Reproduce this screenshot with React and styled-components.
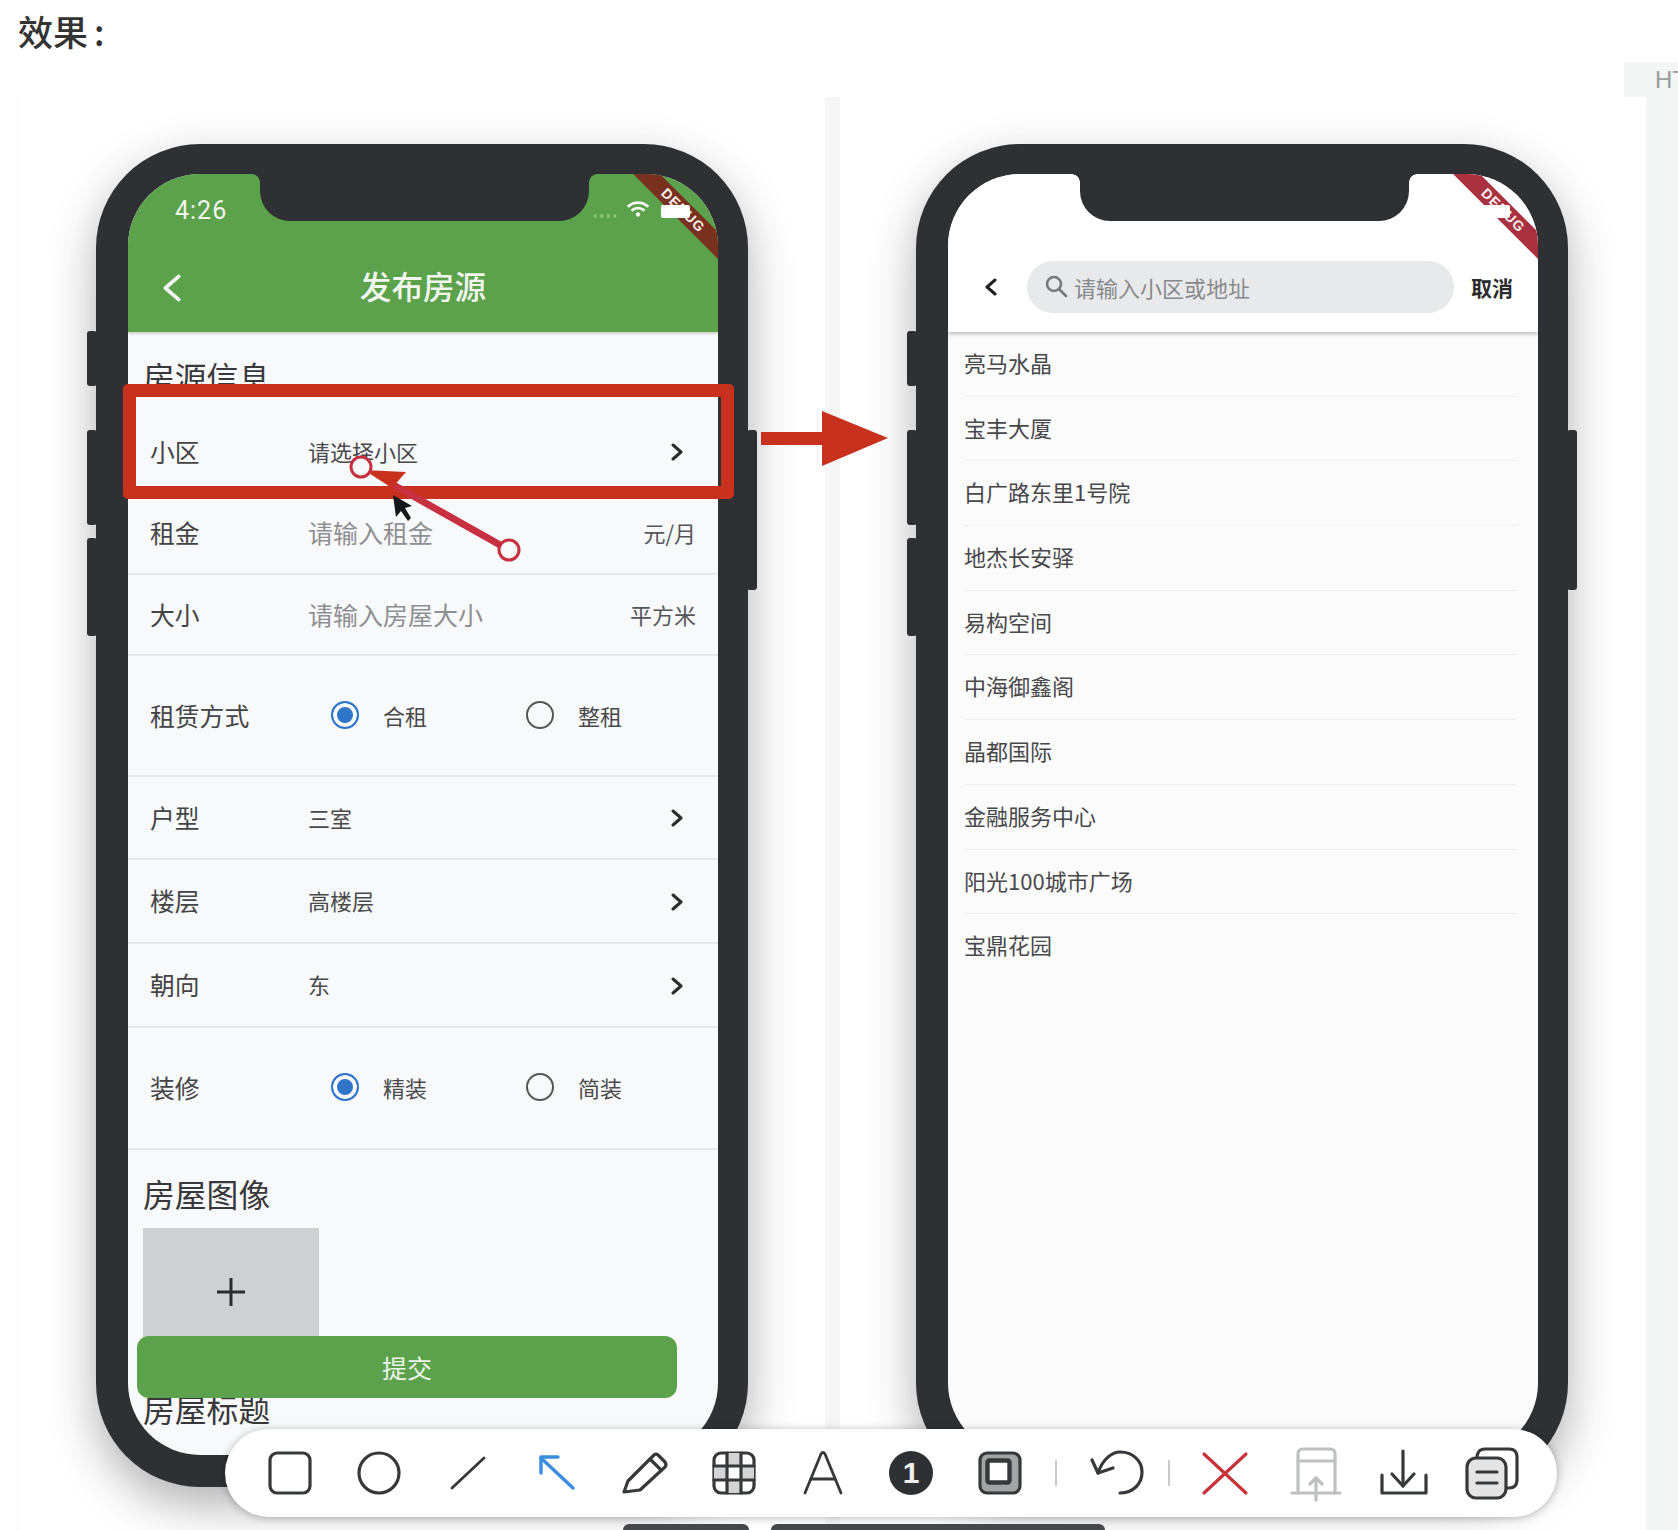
import React from 'react';
import styled, { createGlobalStyle } from 'styled-components';
import { FaWifi } from 'react-icons/fa';

const GlobalStyle = createGlobalStyle`
  html, body {
    margin: 0;
    padding: 0;
    background: #fff;
  }
  * {
    box-sizing: border-box;
  }
`;

const FONT = `"Noto Sans CJK SC", "Noto Sans", sans-serif`;
const GREEN = '#5ca14b';
const FRAME = '#2f3033';
const RED = '#c9311f';

const communities = [
  '亮马水晶',
  '宝丰大厦',
  '白广路东里1号院',
  '地杰长安驿',
  '易构空间',
  '中海御鑫阁',
  '晶都国际',
  '金融服务中心',
  '阳光100城市广场',
  '宝鼎花园',
];

const Chevron = ({ size = 18, color = '#2c2c2e', width = 3, dir = 'right' }) => (
  <svg width={size * 0.67} height={size} viewBox="0 0 12 18" fill="none">
    <polyline
      points={dir === 'right' ? '2,2 10,9 2,16' : '10,2 2,9 10,16'}
      stroke={color}
      strokeWidth={width}
      strokeLinecap="round"
      strokeLinejoin="round"
    />
  </svg>
);

const ToolIcon = ({ children, color = '#37383b', width = 3.2 }) => (
  <ToolSvg viewBox="0 0 44 44" fill="none" stroke={color} strokeWidth={width} strokeLinecap="round" strokeLinejoin="round">
    {children}
  </ToolSvg>
);

const FormRow = ({ label, value, trailing, height, muted, big }) => (
  <Row $height={height}>
    <RowLabel>{label}</RowLabel>
    <RowValue $muted={muted} $big={big}>{value}</RowValue>
    {trailing === 'chevron' ? (
      <ChevronSlot>
        <Chevron />
      </ChevronSlot>
    ) : (
      <Unit>{trailing}</Unit>
    )}
  </Row>
);

const RadioRow = ({ label, options, height }) => (
  <Row $height={height}>
    <RowLabel>{label}</RowLabel>
    <RadioGroup>
      {options.map((option, i) => (
        <RadioOption key={option}>
          <Radio $checked={i === 0} />
          <span>{option}</span>
        </RadioOption>
      ))}
    </RadioGroup>
  </Row>
);

const Bezel = () => (
  <>
    <SideKey $side="left" $top={187} $height={55} />
    <SideKey $side="left" $top={286} $height={95} />
    <SideKey $side="left" $top={394} $height={98} />
    <SideKey $side="right" $top={286} $height={160} />
  </>
);

const Top = ({ dark }) => (
  <>
    <Notch />
    <Ribbon $dark={dark}>DEBUG</Ribbon>
    <Battery />
  </>
);

const App = () => {
  return (
    <Page>
      <GlobalStyle />
      <TopBar>
        <Heading>
          效果<Colon>:</Colon>
        </Heading>
        <FileTag>HT</FileTag>
      </TopBar>

      <Stage>
        <Panel>
          <Phone>
            <Bezel />
            <Screen>
              <Top dark />
              <GreenHeader>
                <StatusBar>
                  <Clock>4:26</Clock>
                  <StatusIcons>
                    <Dots />
                    <FaWifi size={22} color="#f4f8f1" />
                  </StatusIcons>
                </StatusBar>
                <NavBar>
                  <BackSlot>
                    <Chevron size={30} color="#f1f6ee" width={2.2} dir="left" />
                  </BackSlot>
                  <NavTitle>发布房源</NavTitle>
                </NavBar>
              </GreenHeader>

              <SectionTitle $top={29} $height={81}>房源信息</SectionTitle>
              <FormRow label="小区" value="请选择小区" trailing="chevron" height={79} />
              <FormRow label="租金" value="请输入租金" trailing="元/月" height={83} muted big />
              <FormRow label="大小" value="请输入房屋大小" trailing="平方米" height={81} muted big />
              <RadioRow label="租赁方式" options={['合租', '整租']} height={121} />
              <FormRow label="户型" value="三室" trailing="chevron" height={83} />
              <FormRow label="楼层" value="高楼层" trailing="chevron" height={84} />
              <FormRow label="朝向" value="东" trailing="chevron" height={84} />
              <RadioRow label="装修" options={['精装', '简装']} height={122} />

              <SectionTitle $top={28} $height={78}>房屋图像</SectionTitle>
              <ImagePicker>
                <svg width="30" height="30" viewBox="0 0 30 30" stroke="#2c2c2e" strokeWidth="3">
                  <line x1="15" y1="1" x2="15" y2="29" />
                  <line x1="1" y1="15" x2="29" y2="15" />
                </svg>
              </ImagePicker>
              <SectionTitle $top={37} $height={80}>房屋标题</SectionTitle>
              <SubmitButton>提交</SubmitButton>
            </Screen>
          </Phone>
        </Panel>

        <Gutter />

        <Panel $right>
          <Phone>
            <Bezel />
            <Screen $white>
              <Top />
              <SearchHeader>
                <BackSmall>
                  <Chevron size={18} color="#222" width={3} dir="left" />
                </BackSmall>
                <SearchPill>
                  <svg width="24" height="24" viewBox="0 0 24 24" fill="none" stroke="#77787c" strokeWidth="2.6" strokeLinecap="round">
                    <circle cx="10" cy="9" r="7" />
                    <line x1="15" y1="14" x2="22" y2="21" />
                  </svg>
                  <SearchText>请输入小区或地址</SearchText>
                </SearchPill>
                <Cancel>取消</Cancel>
              </SearchHeader>
              <List>
                {communities.map((name) => (
                  <ListItem key={name}>{name}</ListItem>
                ))}
              </List>
            </Screen>
          </Phone>
        </Panel>

        <EdgeStrip />
      </Stage>

      <Highlight />

      <Annotation width="200" height="130" viewBox="0 0 200 130" $left={340} $top={445}>
        <line x1="169" y1="105" x2="50" y2="38" stroke="#c7303f" strokeWidth="7" />
        <polygon points="24,25 66,27 52,43" fill={RED} />
        <circle cx="21" cy="22" r="10" fill="#f8f9fb" stroke="#c7303f" strokeWidth="3" />
        <circle cx="169" cy="105" r="10" fill="#f8f9fb" stroke="#c7303f" strokeWidth="3" />
        <polygon points="53,50 56,72 61,66 68,76 71,73 65,63 72,61" fill="#16171a" />
      </Annotation>

      <Annotation width="130" height="60" viewBox="0 0 130 60" $left={760} $top={409}>
        <rect x="1" y="23" width="65" height="13" fill={RED} />
        <polygon points="62,2 128,29 62,57" fill={RED} />
      </Annotation>

      <Toolbar>
        <ToolGroup>
          <ToolIcon>
            <rect x="2" y="2" width="40" height="40" rx="7" />
          </ToolIcon>
          <ToolIcon>
            <circle cx="22" cy="22" r="20" />
          </ToolIcon>
          <ToolIcon width={2.8}>
            <line x1="6" y1="37" x2="38" y2="7" />
          </ToolIcon>
          <ToolIcon color="#3a8de0" width={3.4}>
            <line x1="7" y1="7" x2="39" y2="37" />
            <polyline points="7,22 7,6 24,6" />
          </ToolIcon>
          <ToolIcon>
            <path d="M1 41 L5 30 L31 4 Q33 2 35 4 L42 11 Q44 14 42 16 L17 39 Z" />
            <line x1="27" y1="8" x2="38" y2="19" />
          </ToolIcon>
          <ToolIcon>
            <rect x="2" y="2" width="40" height="40" rx="7" />
            <rect x="15" y="2" width="14" height="13" fill="#d4d4d5" stroke="none" />
            <rect x="2" y="15" width="13" height="14" fill="#d4d4d5" stroke="none" />
            <rect x="29" y="15" width="13" height="14" fill="#d4d4d5" stroke="none" />
            <rect x="15" y="29" width="14" height="13" fill="#d4d4d5" stroke="none" />
            <line x1="15" y1="2" x2="15" y2="42" />
            <line x1="29" y1="2" x2="29" y2="42" />
            <line x1="2" y1="15" x2="42" y2="15" />
            <line x1="2" y1="29" x2="42" y2="29" />
          </ToolIcon>
          <ToolIcon width={2.8}>
            <path d="M4 42 L20 3 Q22 0 24 3 L40 42" />
            <line x1="10" y1="28" x2="34" y2="28" />
          </ToolIcon>
          <ToolIcon>
            <circle cx="22" cy="22" r="22" fill="#2f3033" stroke="none" />
            <BadgeText x="22" y="32">1</BadgeText>
          </ToolIcon>
          <ToolIcon>
            <rect x="2" y="2" width="40" height="40" rx="7" fill="#a3a4a5" />
            <rect x="9.5" y="9.5" width="22" height="22" rx="2" fill="#fff" strokeWidth="4.4" />
          </ToolIcon>
        </ToolGroup>
        <Separator $before={33} $after={38} />
        <ToolIcon>
          <path d="M3 22 C8 7 18 1 25 1 C38 1 47 10 47 21 C47 33 38 42 25 42" />
          <polyline points="-3,9 3,22 18,17" />
        </ToolIcon>
        <Separator $before={29} $after={33} />
        <ToolIcon color="#c8333a">
          <line x1="1" y1="3" x2="43" y2="42" />
          <line x1="43" y1="3" x2="1" y2="42" />
        </ToolIcon>
        <ToolTail>
          <ToolIcon color="#bfc0c2">
            <path d="M4 42 L4 3 Q4 -2 9 -2 L36 -2 Q41 -2 41 3 L41 42" />
            <line x1="4" y1="10" x2="41" y2="10" />
            <line x1="-2" y1="42" x2="46" y2="42" />
            <line x1="22" y1="49" x2="22" y2="27" />
            <polyline points="16,33 22,27 28,33" />
          </ToolIcon>
          <ToolIcon>
            <line x1="22" y1="0" x2="22" y2="35" />
            <polyline points="11,23 22,35 33,23" />
            <polyline points="1,24 1,42 45,42 45,24" />
          </ToolIcon>
          <ToolIcon>
            <path d="M7 7 C7 1 10 -2 15 -2 L39 -2 Q47 -2 47 6 L47 29 Q47 37 39 37 L36 37" />
            <rect x="-3" y="7" width="39" height="40" rx="9" fill="#e4e4e5" />
            <line x1="7" y1="21" x2="27" y2="21" />
            <line x1="7" y1="32" x2="27" y2="32" />
          </ToolIcon>
        </ToolTail>
      </Toolbar>

      <BottomTabs>
        <BottomTab $width={126} />
        <BottomTab $width={334} />
      </BottomTabs>
    </Page>
  );
};

const Page = styled.div`
  position: relative;
  width: 1678px;
  height: 1530px;
  overflow: hidden;
  background: #fff;
  font-family: ${FONT};
`;

const TopBar = styled.div`
  display: flex;
  justify-content: space-between;
  height: 97px;
  padding-left: 18px;
`;

const Heading = styled.h1`
  margin: 6px 0 0;
  height: 50px;
  font-size: 35px;
  line-height: 50px;
  font-weight: 500;
  color: #333;
`;

const Colon = styled.span`
  margin-left: 6px;
`;

const FileTag = styled.div`
  align-self: flex-end;
  width: 54px;
  height: 35px;
  padding-left: 31px;
  overflow: hidden;
  white-space: nowrap;
  font-family: 'Liberation Sans', sans-serif;
  font-size: 24px;
  line-height: 35px;
  color: #9a9b9c;
  background: #f4f5f5;
`;

const Stage = styled.div`
  display: flex;
  height: 1433px;
  padding-left: 18px;
`;

const Panel = styled.div`
  flex: 0 0 807px;
  padding: 47px 0 0 ${(p) => (p.$right ? 76 : 78)}px;
  background: #fff;
  box-shadow: -1px 0 0 #f6f6f6;
`;

const Gutter = styled.div`
  flex: 0 0 15px;
  background: #f6f6f7;
`;

const EdgeStrip = styled.div`
  flex: 1;
  margin-left: -1px;
  background: #f4f5f5;
`;

const Phone = styled.div`
  position: relative;
  width: 652px;
  height: 1343px;
  padding: 30px 30px 32px 32px;
  border-radius: 104px;
  background: ${FRAME};
  box-shadow: 0 18px 46px rgba(40, 40, 45, 0.36);
`;

const SideKey = styled.div`
  position: absolute;
  top: ${(p) => p.$top}px;
  ${(p) => p.$side}: -9px;
  width: 10px;
  height: ${(p) => p.$height}px;
  border-radius: 3px;
  background: ${FRAME};
`;

const Screen = styled.div`
  position: relative;
  height: 100%;
  overflow: hidden;
  border-radius: 72px;
  background: ${(p) => (p.$white ? '#fbfbfc' : '#f8f9fb')};
  color: #3a3a3c;
`;

const Notch = styled.div`
  position: absolute;
  top: 0;
  left: 132px;
  z-index: 3;
  width: 329px;
  height: 47px;
  border-radius: 0 0 30px 30px;
  background: ${FRAME};

  &::before,
  &::after {
    content: '';
    position: absolute;
    top: 0;
    width: 8px;
    height: 8px;
  }
  &::before {
    left: -8px;
    background: radial-gradient(circle at 0 100%, transparent 7.5px, ${FRAME} 8px);
  }
  &::after {
    right: -8px;
    background: radial-gradient(circle at 100% 100%, transparent 7.5px, ${FRAME} 8px);
  }
`;

const Ribbon = styled.div`
  position: absolute;
  top: 27px;
  right: -45px;
  z-index: 2;
  width: 160px;
  height: 19px;
  transform: rotate(45deg);
  text-align: center;
  font-family: 'Liberation Sans', sans-serif;
  font-size: 14px;
  line-height: 19px;
  font-weight: 700;
  letter-spacing: 1px;
  color: #f6ece8;
  background: ${(p) => (p.$dark ? '#78301f' : '#a8303f')};
`;

const Battery = styled.div`
  position: absolute;
  top: 31px;
  right: 28px;
  z-index: 2;
  width: 29px;
  height: 13px;
  border-radius: 2px;
  background: #fff;
`;

const GreenHeader = styled.header`
  height: 158px;
  background: ${GREEN};
  box-shadow: 0 1px 3px rgba(60, 110, 50, 0.4);
  color: #f1f6ee;
`;

const StatusBar = styled.div`
  display: flex;
  justify-content: space-between;
  align-items: center;
  height: 70px;
  padding: 0 69px 0 47px;
`;

const Clock = styled.span`
  margin-top: 3px;
  font-family: 'Roboto', sans-serif;
  font-size: 25px;
  letter-spacing: 1px;
`;

const StatusIcons = styled.div`
  display: flex;
  align-items: center;
  gap: 9px;
`;

const Dots = styled.span`
  width: 26px;
  height: 4px;
  margin-top: 14px;
  background: radial-gradient(circle, #8cc27a 1.6px, transparent 2px) 0 0 / 6.5px 4px;
`;

const NavBar = styled.div`
  position: relative;
  display: flex;
  justify-content: center;
  align-items: center;
  height: 82px;
`;

const BackSlot = styled.div`
  position: absolute;
  left: 34px;
  display: flex;
  margin-top: 5px;
`;

const NavTitle = styled.h2`
  margin: 0;
  font-size: 31.6px;
  font-weight: 500;
`;

const SectionTitle = styled.div`
  height: ${(p) => p.$height}px;
  padding: ${(p) => p.$top}px 0 0 15px;
  font-size: 31.8px;
  line-height: 31px;
  color: #38383a;
`;

const Row = styled.div`
  display: flex;
  align-items: center;
  height: ${(p) => p.$height}px;
  padding: 0 22px 2px;
  border-bottom: 2px solid #e7e8eb;
`;

const RowLabel = styled.span`
  flex: 0 0 158px;
  font-size: 24.8px;
  color: #444446;
`;

const RowValue = styled.span`
  flex: 1;
  font-size: ${(p) => (p.$big ? 25 : 22)}px;
  color: ${(p) => (p.$muted ? '#8e8f93' : '#4a4a4c')};
`;

const Unit = styled.span`
  font-size: 22px;
  color: #55565a;
`;

const ChevronSlot = styled.span`
  display: flex;
  margin: 3px 13px 0 0;
`;

const RadioGroup = styled.div`
  display: flex;
  padding-left: 23px;
  gap: 83px;
`;

const RadioOption = styled.div`
  display: flex;
  align-items: center;
  gap: 24px;
  width: 112px;
  font-size: 22px;
  line-height: 28px;
  white-space: nowrap;
  color: #4a4a4c;
`;

const Radio = styled.span`
  flex: 0 0 28px;
  height: 28px;
  border-radius: 50%;
  border: 2.5px solid ${(p) => (p.$checked ? '#2f75c9' : '#55565a')};
  background: ${(p) => (p.$checked ? '#2f75c9' : 'transparent')};
  box-shadow: ${(p) => (p.$checked ? 'inset 0 0 0 4px #f8f9fb' : 'none')};
`;

const ImagePicker = styled.div`
  display: flex;
  justify-content: center;
  align-items: center;
  width: 176px;
  height: 128px;
  margin-left: 15px;
  background: #cfd0d2;
`;

const SubmitButton = styled.button`
  position: absolute;
  top: 1162px;
  left: 9px;
  width: 540px;
  height: 62px;
  border: 0;
  border-radius: 12px;
  background: ${GREEN};
  color: #eef5ea;
  font-family: ${FONT};
  font-size: 25px;
`;

const SearchHeader = styled.header`
  display: flex;
  align-items: center;
  height: 158px;
  padding: 68px 0 0 37px;
  background: #fff;
  box-shadow: 0 2px 4px rgba(0, 0, 0, 0.26);
`;

const BackSmall = styled.div`
  display: flex;
  flex: 0 0 42px;
`;

const SearchPill = styled.div`
  display: flex;
  align-items: center;
  gap: 6px;
  flex: 0 0 427px;
  height: 52px;
  padding: 0 0 0 17px;
  border-radius: 26px;
  background: #e8e9ea;
`;

const SearchText = styled.span`
  font-size: 22px;
  color: #88898d;
`;

const Cancel = styled.span`
  flex: none;
  margin-left: 17px;
  white-space: nowrap;
  font-size: 21px;
  font-weight: 700;
  color: #2c2c2e;
`;

const List = styled.ul`
  margin: 0;
  padding: 0 21px 0 16px;
  list-style: none;
`;

const ListItem = styled.li`
  height: 64.7px;
  font-size: 22px;
  line-height: 61px;
  color: #48484a;
  border-bottom: 1.5px solid #eff0f2;

  &:last-child {
    border-bottom: 0;
  }
`;

const Highlight = styled.div`
  position: absolute;
  top: 384px;
  left: 123px;
  width: 611px;
  height: 115px;
  border: 13px solid ${RED};
  border-radius: 5px;
`;

const Annotation = styled.svg`
  position: absolute;
  top: ${(p) => p.$top}px;
  left: ${(p) => p.$left}px;
`;

const Toolbar = styled.div`
  position: absolute;
  top: 1429px;
  left: 225px;
  display: flex;
  align-items: center;
  width: 1332px;
  height: 88px;
  padding-left: 43px;
  border-radius: 44px;
  background: #fff;
  box-shadow: 0 1px 8px rgba(0, 0, 0, 0.28);
`;

const ToolSvg = styled.svg`
  flex: 0 0 44px;
  width: 44px;
  height: 44px;
  overflow: visible;
`;

const BadgeText = styled.text`
  fill: #f0f0f0;
  stroke: none;
  text-anchor: middle;
  font-family: 'Liberation Sans', sans-serif;
  font-size: 30px;
  font-weight: 700;
`;

const ToolGroup = styled.div`
  display: flex;
  align-items: center;
  gap: 44.75px;
`;

const ToolTail = styled(ToolGroup)`
  margin-left: 47px;
  gap: 42.5px;

  & > :last-child {
    margin-left: 3px;
  }
`;

const Separator = styled.span`
  width: 2px;
  height: 26px;
  margin: 0 ${(p) => p.$after}px 0 ${(p) => p.$before}px;
  background: #c9cacc;
`;

const BottomTabs = styled.div`
  position: absolute;
  top: 1524px;
  left: 623px;
  display: flex;
  gap: 22px;
`;

const BottomTab = styled.div`
  width: ${(p) => p.$width}px;
  height: 6px;
  border-radius: 6px 6px 0 0;
  background: #46474a;
`;

export default App;
